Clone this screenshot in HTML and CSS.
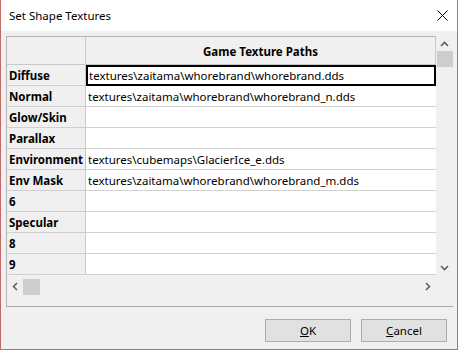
FILE: index.html
```html
<!DOCTYPE html>
<html lang="en">
<head>
    <meta charset="UTF-8">
    <title>Set Shape Textures</title>
    <link rel="stylesheet" href="styles.css">
</head>
<body>
    <div class="window">
        <div class="titlebar">
            <span class="title">Set Shape Textures</span>
            <svg class="close" width="11" height="11" viewBox="0 0 11 11">
                <path d="M0.5 0.5 L10.5 10.5 M10.5 0.5 L0.5 10.5" stroke="#000" stroke-width="1" fill="none"/>
            </svg>
        </div>
        <div class="content">
            <div class="frame">
                <div class="view-row">
                    <div class="grid">
                        <div class="corner"></div>
                        <div class="colhead">Game Texture Paths</div>

                        <div class="rowhead">Diffuse</div>
                        <div class="cell current">textures\zaitama\whorebrand\whorebrand.dds</div>
                        <div class="rowhead">Normal</div>
                        <div class="cell">textures\zaitama\whorebrand\whorebrand_n.dds</div>
                        <div class="rowhead">Glow/Skin</div>
                        <div class="cell"></div>
                        <div class="rowhead">Parallax</div>
                        <div class="cell"></div>
                        <div class="rowhead">Environment</div>
                        <div class="cell">textures\cubemaps\GlacierIce_e.dds</div>
                        <div class="rowhead">Env Mask</div>
                        <div class="cell">textures\zaitama\whorebrand\whorebrand_m.dds</div>
                        <div class="rowhead">6</div>
                        <div class="cell"></div>
                        <div class="rowhead">Specular</div>
                        <div class="cell"></div>
                        <div class="rowhead">8</div>
                        <div class="cell"></div>
                        <div class="rowhead">9</div>
                        <div class="cell"></div>
                    </div>
                    <div class="vscroll">
                        <div class="arrow">
                            <svg width="9" height="6" viewBox="0 0 9 6"><path d="M1 5 L4.5 1.5 L8 5" stroke="#606060" stroke-width="1.6" fill="none"/></svg>
                        </div>
                        <div class="vthumb"></div>
                        <div class="vtrack"></div>
                        <div class="arrow">
                            <svg width="9" height="6" viewBox="0 0 9 6"><path d="M1 1 L4.5 4.5 L8 1" stroke="#606060" stroke-width="1.6" fill="none"/></svg>
                        </div>
                    </div>
                </div>
                <div class="hscroll-row">
                    <div class="hscroll">
                        <div class="harrow">
                            <svg width="6" height="9" viewBox="0 0 6 9"><path d="M5 1 L1.5 4.5 L5 8" stroke="#606060" stroke-width="1.6" fill="none"/></svg>
                        </div>
                        <div class="hthumb"></div>
                        <div class="htrack"></div>
                        <div class="harrow">
                            <svg width="6" height="9" viewBox="0 0 6 9"><path d="M1 1 L4.5 4.5 L1 8" stroke="#606060" stroke-width="1.6" fill="none"/></svg>
                        </div>
                    </div>
                </div>
            </div>
            <div class="buttons">
                <button class="btn"><u>O</u>K</button>
                <button class="btn"><u>C</u>ancel</button>
            </div>
        </div>
    </div>
</body>
</html>
```

FILE: styles.css
```css
* {
    margin: 0;
    padding: 0;
    box-sizing: border-box;
}
body {
    font-family: "Noto Sans", "Open Sans", sans-serif;
    font-size: 11.5px;
    color: #000;
    background: #f0f0f0;
}
.window {
    width: 458px;
    height: 350px;
    border: 1px solid #c26a6a;
    border-top: none;
    background: #f0f0f0;
    display: flex;
    flex-direction: column;
}
.titlebar {
    height: 31px;
    background: #fff;
    display: flex;
    align-items: center;
    justify-content: space-between;
    padding: 0 9px 0 8px;
}
.title {
    font-size: 11.5px;
}
.close {
    display: block;
}
.content {
    padding: 5px 4px 0 5px;
    display: flex;
    flex-direction: column;
}
.frame {
    width: 447px;
    height: 271px;
    border-left: 1px solid #b4b4b4;
    border-bottom: 1px solid #a8a8a8;
}
.view-row {
    display: flex;
}
.grid {
    width: 429px;
    display: grid;
    grid-template-columns: 79px 1fr;
    grid-template-rows: 29px repeat(10, 21px);
    background: #fff;
}
.corner, .colhead {
    background: #f0f0f0;
    border-top: 1px solid #b4b4b4;
    border-bottom: 1px solid #c8c8c8;
    border-right: 1px solid #c8c8c8;
}
.colhead {
    font-weight: bold;
    display: flex;
    align-items: center;
    justify-content: center;
    padding-top: 1px;
}
.rowhead {
    background: #f0f0f0;
    font-weight: bold;
    border-bottom: 1px solid #d0d0d0;
    border-right: 1px solid #c8c8c8;
    padding-left: 2px;
    display: flex;
    align-items: center;
}
.cell {
    border-bottom: 1px solid #d0d0d0;
    padding-left: 2px;
    display: flex;
    align-items: center;
    white-space: nowrap;
    overflow: hidden;
}
.cell.current {
    border: 2px solid #000;
    padding-left: 1px;
}
.vscroll {
    width: 17px;
    height: 239px;
    display: flex;
    flex-direction: column;
    background: #f0f0f0;
}
.arrow {
    height: 15px;
    display: flex;
    align-items: center;
    justify-content: center;
}
.vthumb {
    height: 16px;
    margin: 0 0 0 1px;
    background: #cdcdcd;
}
.vtrack {
    flex: 1;
}
.hscroll-row {
    padding-top: 3px;
    display: flex;
}
.hscroll {
    width: 429px;
    height: 17px;
    display: flex;
}
.harrow {
    width: 16px;
    display: flex;
    align-items: center;
    justify-content: center;
}
.hthumb {
    width: 17px;
    margin: 1px 0 0 0;
    background: #cdcdcd;
}
.htrack {
    flex: 1;
}
.buttons {
    display: flex;
    justify-content: flex-end;
    gap: 10px;
    padding: 12px 6px 0 0;
}
.btn {
    width: 86px;
    height: 23px;
    background: #e1e1e1;
    border: 1px solid #adadad;
    font-family: "Noto Sans", "Open Sans", sans-serif;
    font-size: 11.5px;
    color: #000;
}
```
